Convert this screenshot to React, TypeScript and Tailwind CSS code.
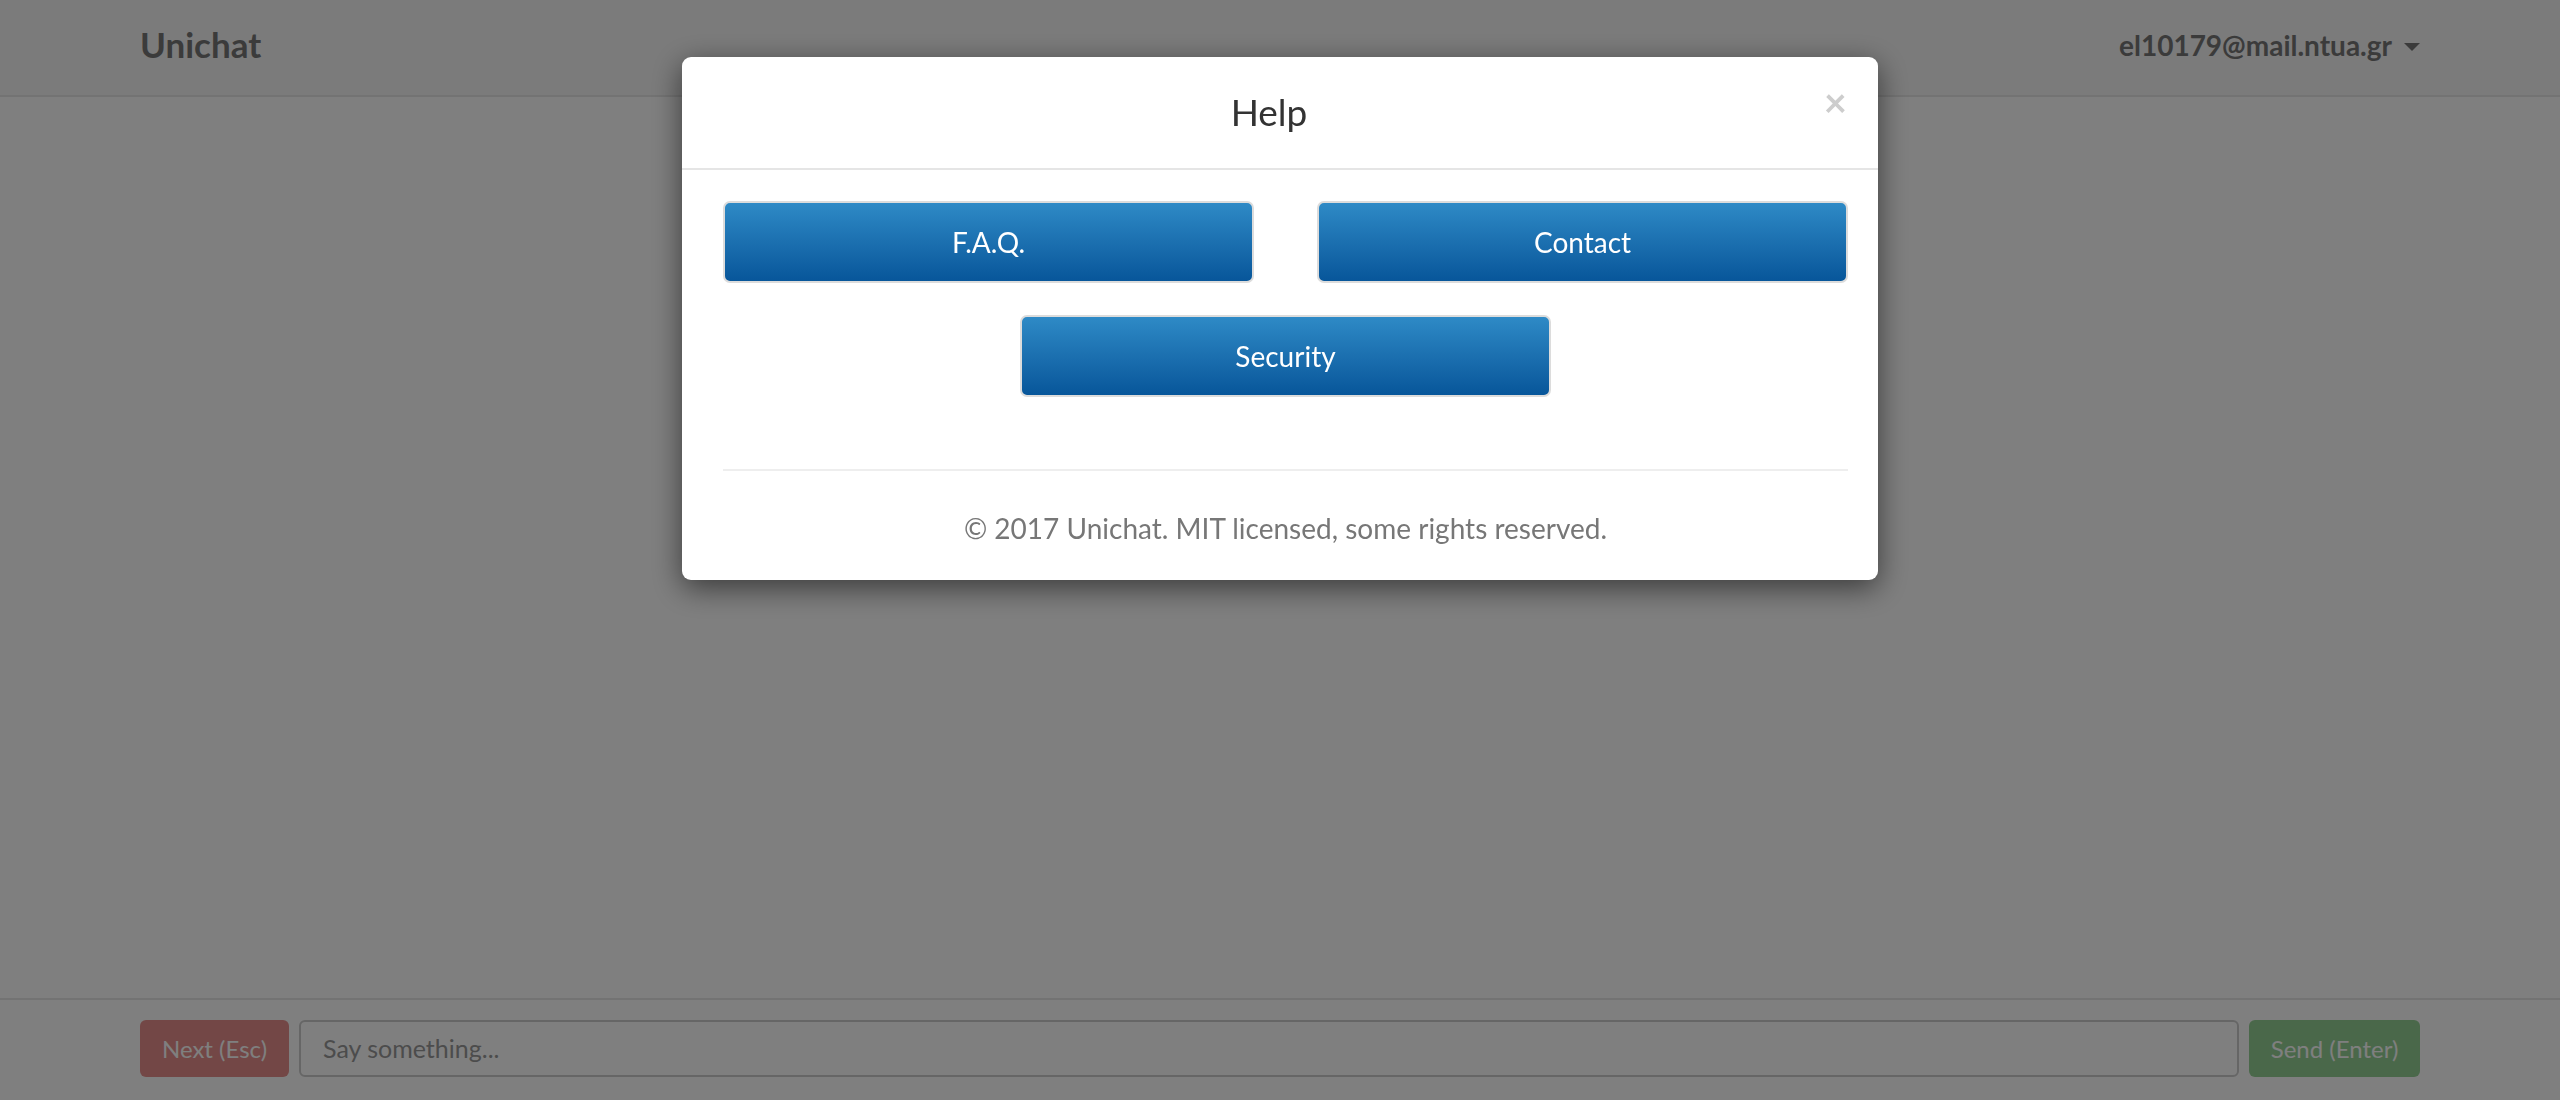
const font = { fontFamily: "Lato, 'Open Sans', sans-serif" }

const HelpButton = ({ label }: { label: string }) => (
    <button className="h-[82px] w-[531px] rounded-[7px] border-2 border-[#dcdcdc] bg-gradient-to-b from-[#2e8ac6] to-[#07569a] text-[28px] text-white">
        {label}
    </button>
)

export default function App() {
    return (
        <div className="relative flex h-screen flex-col bg-white" style={font}>
            <header className="h-[97px] shrink-0 border-b-2 border-[#e7e7e7] bg-[#f6f6f6]">
                <div className="mx-[140px] flex h-full items-center justify-between pb-[6px]">
                    <span className="text-[35px] font-bold text-[#777]">Unichat</span>
                    <span className="flex items-center gap-3 text-[28px] font-bold text-[#777]">
                        el10179@mail.ntua.gr
                        <span className="mt-1 h-0 w-0 border-x-[8px] border-t-[8px] border-x-transparent border-t-[#777]" />
                    </span>
                </div>
            </header>

            <main className="flex-1" />

            <footer className="h-[102px] shrink-0 border-t-2 border-[#e7e7e7] bg-white">
                <div className="mx-[140px] flex h-full items-center gap-[10px] pb-[3px]">
                    <button className="h-[57px] w-[149px] rounded-[6px] bg-[#e68f8c] text-[24px] text-white">Next (Esc)</button>
                    <div className="flex h-[57px] flex-1 items-center rounded-[6px] border-2 border-[#ccc] px-[22px] text-[25px] text-[#999]">
                        Say something...
                    </div>
                    <button className="h-[57px] w-[171px] rounded-[6px] bg-[#95d195] text-[24px] text-white">Send (Enter)</button>
                </div>
            </footer>

            <div className="fixed inset-0 flex items-start justify-center bg-black/50 pt-[57px]">
                <div className="w-[1196px] rounded-[9px] bg-white shadow-[0_8px_30px_rgba(0,0,0,0.55)]">
                    <div className="relative flex h-[113px] items-center justify-center border-b-2 border-[#e5e5e5] pb-[2px] pr-[22px]">
                        <h2 className="text-[37px] text-[#333]">Help</h2>
                        <span className="absolute right-[31px] top-[25px] text-[40px] font-bold leading-none text-[#cdcdcd]">×</span>
                    </div>
                    <div className="pl-[41px] pr-[30px]">
                        <div className="flex justify-between pt-[31px]">
                            <HelpButton label="F.A.Q." />
                            <HelpButton label="Contact" />
                        </div>
                        <div className="flex justify-center pt-[32px]">
                            <HelpButton label="Security" />
                        </div>
                        <div className="mt-[72px] border-t-2 border-[#eee]" />
                        <p className="flex h-[109px] items-center justify-center pt-[4px] text-[28px] text-[#777]">
                            © 2017 Unichat. MIT licensed, some rights reserved.
                        </p>
                    </div>
                </div>
            </div>
        </div>
    )
}
